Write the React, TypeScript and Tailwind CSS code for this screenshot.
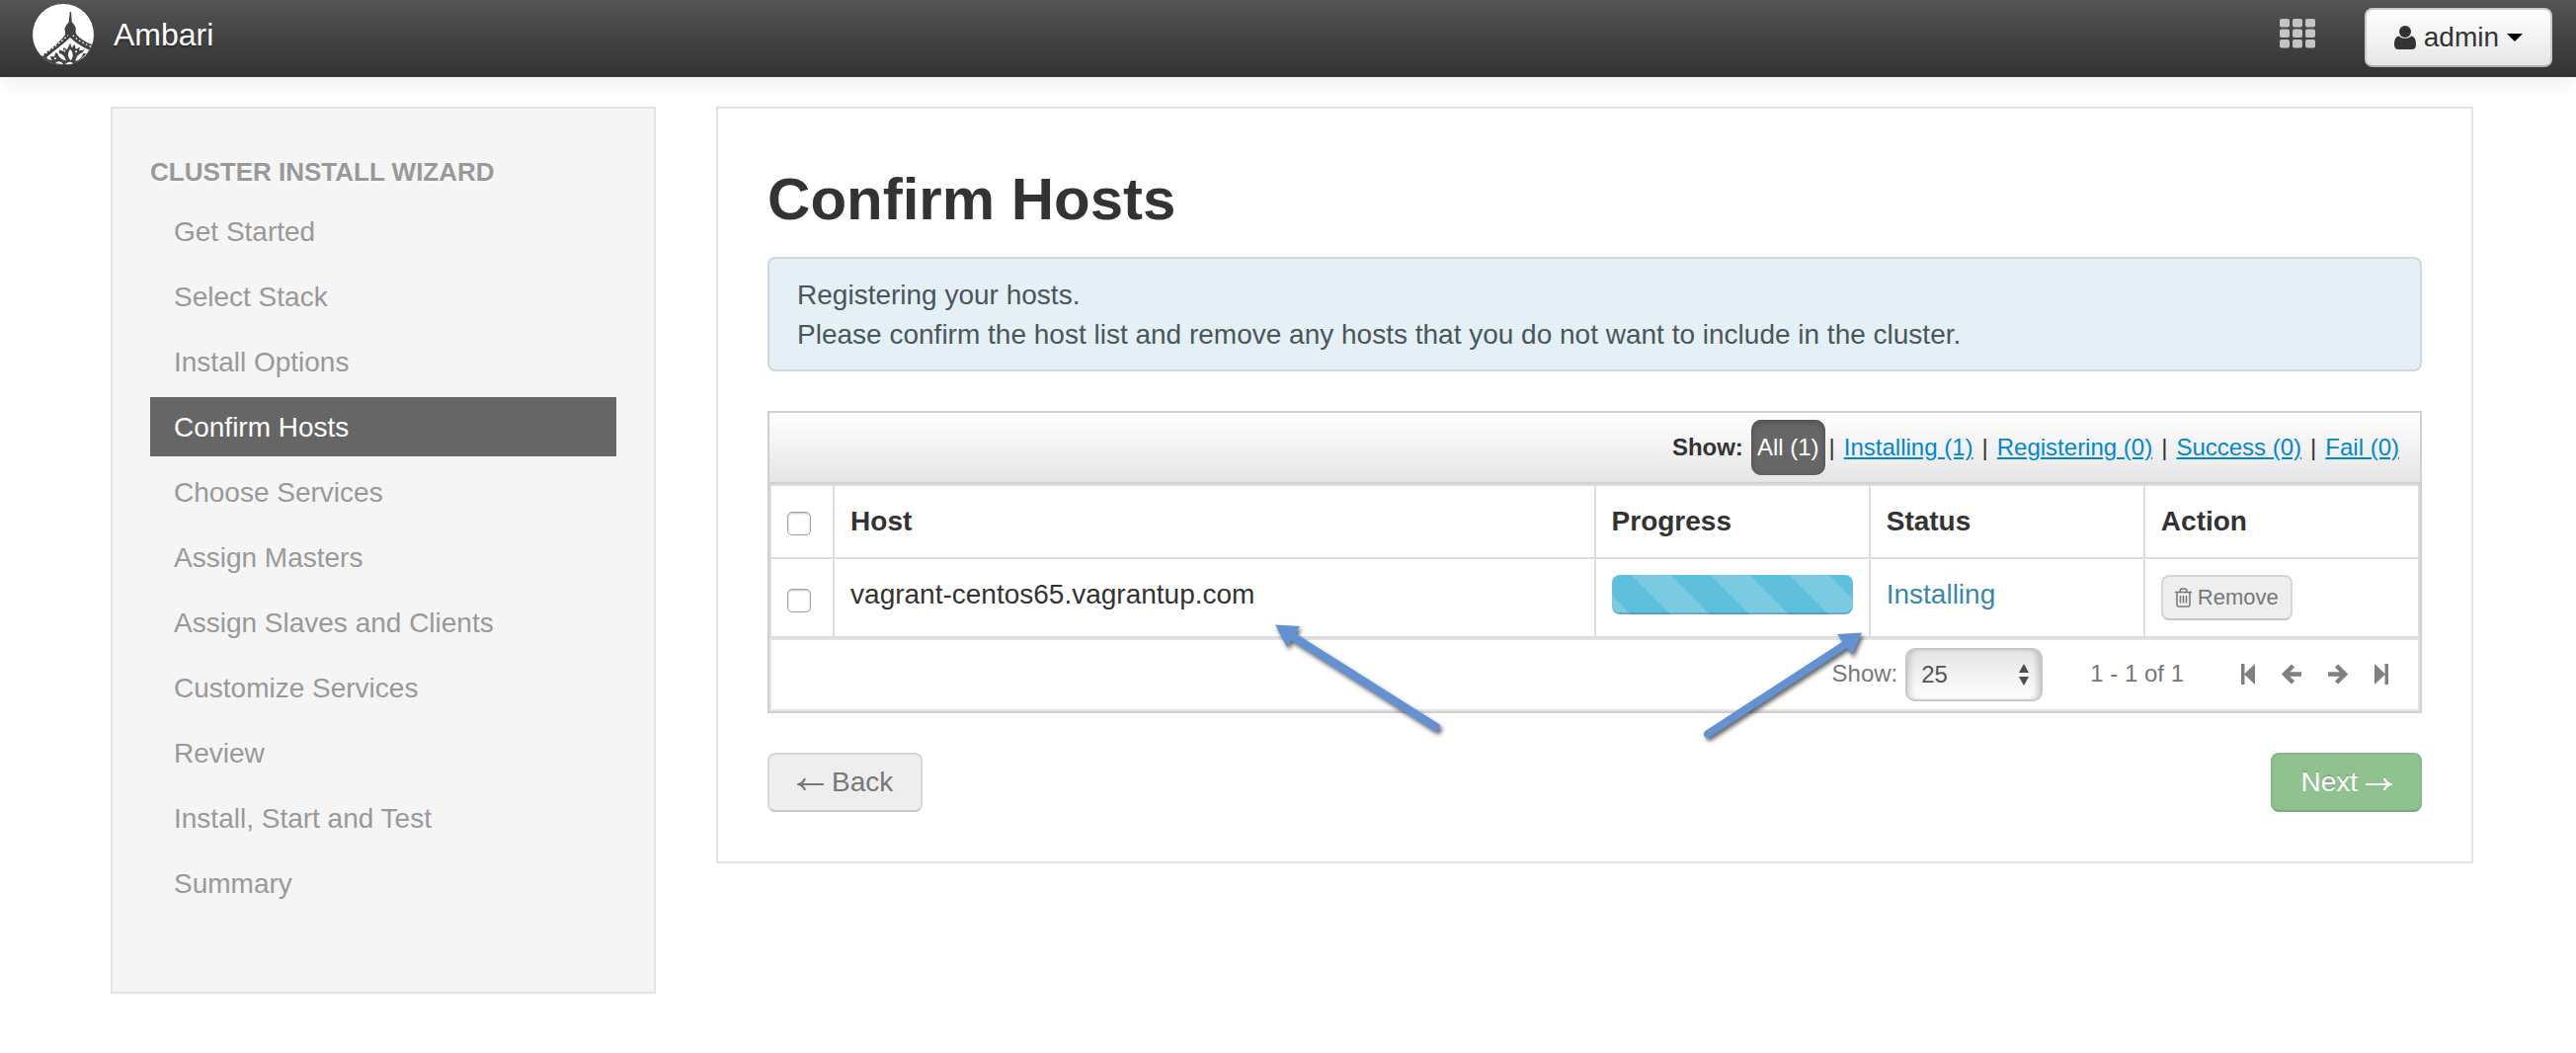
import React from "react";

const steps = [
  "Get Started",
  "Select Stack",
  "Install Options",
  "Confirm Hosts",
  "Choose Services",
  "Assign Masters",
  "Assign Slaves and Clients",
  "Customize Services",
  "Review",
  "Install, Start and Test",
  "Summary",
];

const filters = ["Installing (1)", "Registering (0)", "Success (0)", "Fail (0)"];

function Logo() {
  return (
    <svg viewBox="16 12 184 184" className="size-[62px]" aria-hidden="true">
      <defs>
        <clipPath id="disc">
          <circle cx="108" cy="104" r="92" />
        </clipPath>
      </defs>
      <g clipPath="url(#disc)">
        <rect x="16" y="12" width="184" height="184" fill="#fff" />
        {/* roof and spire */}
        <path
          d="M128 36 L132 36 L134 66 L141 74 L146 84 L145 96 L148 104 C160 118 178 128 204 138 L204 204 L10 204 L38 172 C62 152 96 132 114 104 L114 96 L112 86 L118 74 L125 66 Z"
          fill="#434343"
        />
        <path d="M129 113 C110 132 84 150 58 172 L62 178 L74 181 L104 176 L128 160 L160 178 L176 168 L186 150 C166 142 146 130 129 113 Z" fill="#fff" />
        <path
          d="M46 168 C72 146 100 130 122 106 M137 106 C152 122 172 132 198 143"
          fill="none"
          stroke="#fff"
          strokeWidth="4"
          strokeDasharray="5 7"
        />
        {/* rosette under the roof */}
        <path
          d="M129 130 L134 144 L142 134 L146 148 L158 142 L156 152 L172 150 L164 160 L178 162 L160 178 L154 204 L70 204 L76 184 L68 170 L82 170 L84 158 L95 162 L96 150 L107 154 L110 142 L119 150 Z"
          fill="#434343"
        />
        <path d="M129 148 C140 160 138 174 131 182 C121 174 120 160 129 148 Z" fill="#fff" />
        <path d="M90 158 C104 160 114 170 116 182 C102 180 93 170 90 158 Z" fill="#fff" />
        <path d="M168 158 C166 172 156 182 145 183 C146 172 154 160 168 158 Z" fill="#fff" />
        <path d="M84 190 C92 182 104 184 108 194 Z M114 194 C120 184 134 184 138 192 Z" fill="#fff" />
        <circle cx="112" cy="153" r="3" fill="#fff" />
        <circle cx="147" cy="155" r="3" fill="#fff" />
        <circle cx="84" cy="176" r="3" fill="#fff" />
      </g>
    </svg>
  );
}

function GridIcon() {
  return (
    <svg viewBox="0 0 36 30" className="h-[30px] w-9" fill="#c4c4c4" aria-hidden="true">
      {[0, 10.5, 21].map((y) =>
        [0, 13, 26].map((x) => <rect key={`${x}-${y}`} x={x} y={y} width="10" height="8.5" rx="2" />)
      )}
    </svg>
  );
}

function UserIcon() {
  return (
    <svg viewBox="0 0 22 24" className="h-6 w-[22px]" fill="#333" aria-hidden="true">
      <circle cx="11" cy="6" r="6" />
      <path d="M5 10.5 C7 13.6 15 13.6 17 10.5 C20.500 11 22 14 22 19 C22 22.500 20.500 24 18 24 L4 24 C1.500 24 0 22.500 0 19 C0 14 1.500 11 5 10.500 Z" />
    </svg>
  );
}

function TrashIcon() {
  return (
    <svg viewBox="0 0 17 20" className="h-5 w-[17px]" fill="none" stroke="#777" strokeWidth="1.5" aria-hidden="true">
      <path d="M0 4.500 H17 M5 4.500 C5 2 6 1 7 1 H10 C11 1 12 2 12 4.500 M2 4.500 V17 C2 18.500 2.800 19 4 19 H13 C14.200 19 15 18.500 15 17 V4.500 M5.500 8 V15.500 M8.500 8 V15.500 M11.500 8 V15.500" />
    </svg>
  );
}

function EndIcon({ last = false }: { last?: boolean }) {
  return (
    <svg viewBox="0 0 14 21" className="h-[21px] w-3.5" fill="#808080" aria-hidden="true">
      {last ? <path d="M0 0 L10.500 10 V0 H14 V21 H10.500 V11 L0 21 Z" /> : <path d="M14 0 L3.500 10 V0 H0 V21 H3.500 V11 L14 21 Z" />}
    </svg>
  );
}

function StepIcon({ next = false }: { next?: boolean }) {
  return (
    <svg viewBox="0 0 20 21" className="h-[21px] w-5" fill="none" stroke="#808080" strokeWidth="4.5" aria-hidden="true">
      {next ? <path d="M0 10.500 H16 M8.500 2 L17 10.500 L8.500 19" /> : <path d="M20 10.500 H4 M11.500 2 L3 10.500 L11.500 19" />}
    </svg>
  );
}

function ThinArrow({ right = false }: { right?: boolean }) {
  return (
    <svg viewBox="0 0 27 14" className="mt-1 h-3.5 w-[27px]" fill="none" stroke="currentColor" strokeWidth="2.200" aria-hidden="true">
      {right ? <path d="M0 7 H25 M19 1 C20 4 22 6 25.500 7 C22 8 20 10 19 13" /> : <path d="M27 7 H2 M8 1 C7 4 5 6 1.500 7 C5 8 7 10 8 13" />}
    </svg>
  );
}

function Checkbox({ label }: { label: string }) {
  return (
    <input
      type="checkbox"
      aria-label={label}
      className="block size-6 appearance-none rounded-[5px] border border-[#a0a0a0] bg-white shadow-[inset_0_1px_2px_rgba(0,0,0,0.25)]"
    />
  );
}

const th = "border-r-2 border-b-2 border-[#ddd] px-4 py-4 text-left align-top font-bold";
const td = "border-r-2 border-b-2 border-[#ddd] px-4 py-4 text-left align-top";

export default function App() {
  return (
    <div className="bg-white font-['Liberation_Sans',Arial,sans-serif] text-[28px] leading-10 text-[#333]">
      <header className="flex h-[78px] items-start justify-between bg-linear-to-b from-[#545454] to-[#333] pr-6 pl-[33px] shadow-[0_2px_20px_rgba(0,0,0,0.1)]">
        <a href="#" className="flex items-start gap-5 pt-1 text-[32px] leading-[62px] text-white [text-shadow:0_2px_2px_rgba(0,0,0,0.4)]">
          <Logo />
          Ambari
        </a>
        <div className="flex items-start gap-[50px] pt-2">
          <button type="button" aria-label="Views" className="pt-[11px]">
            <GridIcon />
          </button>
          <button
            type="button"
            className="flex h-[60px] items-center rounded-lg border-2 border-[#ccc] border-b-[#b3b3b3] bg-linear-to-b from-white to-[#e6e6e6] px-7 [text-shadow:0_2px_2px_rgba(255,255,255,0.75)]"
          >
            <UserIcon />
            <span className="ml-2">admin</span>
            <svg viewBox="0 0 16 8" className="ml-2 h-2 w-4" aria-hidden="true">
              <path d="M0 0 H16 L8 8 Z" fill="#000" />
            </svg>
          </button>
        </div>
      </header>

      <div className="flex items-start gap-[61px] pt-[30px] pr-[104px] pb-[60px] pl-28">
        <nav aria-label="Cluster install wizard" className="w-[23.08%] shrink-0 border-2 border-[#e3e3e3] bg-[#f5f5f5] px-[38px] pt-11 pb-20 text-[#999]">
          <h2 className="mb-2.5 text-[26px] font-bold uppercase [text-shadow:0_2px_0_rgba(255,255,255,0.6)]">Cluster Install Wizard</h2>
          <ul className="flex flex-col gap-1.5">
            {steps.map((step) => (
              <li key={step}>
                <a
                  href="#"
                  className={
                    step === "Confirm Hosts"
                      ? "block bg-[#666] px-6 pt-[11px] pb-[9px] text-white"
                      : "block px-6 pt-[11px] pb-[9px]"
                  }
                >
                  {step}
                </a>
              </li>
            ))}
          </ul>
        </nav>

        <main className="min-w-0 flex-1 border-2 border-[#e3e3e3] px-[50px] py-[50px]">
          <h1 className="pt-0.5 pb-[18px] text-[60px] leading-[80px] font-bold">Confirm Hosts</h1>

          <div className="rounded-lg border-2 border-[#ced9dc] bg-[#e4f0f5] px-7 pt-[17px] pb-[15px] text-[#4a565a]">
            <p>Registering your hosts.</p>
            <p>Please confirm the host list and remove any hosts that you do not want to include in the cluster.</p>
          </div>

          <section className="relative mt-10 border-2 border-[#d0d0d0]">
            <div className="flex h-[72px] items-center justify-end border-b-2 border-[#d0d0d0] bg-linear-to-b from-white to-[#e5e5e5] pr-[21px] text-2xl">
              <span className="mr-2 font-bold">Show:</span>
              <a href="#" className="rounded-[10px] bg-[#666] px-1.5 py-2 leading-10 text-white shadow-[inset_0_2px_6px_rgba(0,0,0,0.25)]">
                All (1)
              </a>
              {filters.map((f, i) => (
                <React.Fragment key={f}>
                  <span className={i === 0 ? "mr-[9px] ml-1" : "mx-[9px]"}>|</span>
                  <a href="#" className="text-[#0088cc] underline">
                    {f}
                  </a>
                </React.Fragment>
              ))}
            </div>

            <table className="w-full table-fixed border-separate border-spacing-0 border-t-2 border-l-2 border-[#ddd]">
              <thead>
                <tr>
                  <th className={`${th} w-[64px]`}>
                    <div className="pt-2.5">
                      <Checkbox label="Select all hosts" />
                    </div>
                  </th>
                  <th className={th}>Host</th>
                  <th className={`${th} w-1/6`}>Progress</th>
                  <th className={`${th} w-1/6`}>Status</th>
                  <th className={`${th} w-1/6`}>Action</th>
                </tr>
              </thead>
              <tbody>
                <tr>
                  <td className={td}>
                    <div className="pt-3.5">
                      <Checkbox label="Select vagrant-centos65.vagrantup.com" />
                    </div>
                  </td>
                  <td className={td}>vagrant-centos65.vagrantup.com</td>
                  <td className={td}>
                    <div
                      role="progressbar"
                      aria-label="Installation progress"
                      className="h-10 rounded-lg bg-[#5fc0dc] bg-[linear-gradient(45deg,rgba(255,255,255,0.17)_25%,transparent_25%,transparent_50%,rgba(255,255,255,0.17)_50%,rgba(255,255,255,0.17)_75%,transparent_75%,transparent)] bg-[length:80px_80px] bg-[position:20px_0] shadow-[inset_0_-2px_0_rgba(0,0,0,0.15)]"
                    />
                  </td>
                  <td className={`${td} text-[#3a87ad]`}>Installing</td>
                  <td className={td}>
                    <button
                      type="button"
                      disabled
                      className="flex h-[46px] items-center gap-1.5 rounded-lg border-2 border-[#d6d6d6] border-b-[#c6c6c6] bg-[#eee] px-3 text-[22px] text-[#777]"
                    >
                      <TrashIcon />
                      Remove
                    </button>
                  </td>
                </tr>
              </tbody>
            </table>

            <div className="flex h-[74px] items-start justify-end border-2 border-[#e3e3e3] pt-2 pr-[30px] text-2xl text-[#777]">
              <label htmlFor="page-size" className="mr-2 leading-[52px]">
                Show:
              </label>
              <div className="relative">
                <select
                  id="page-size"
                  defaultValue="25"
                  className="block h-[54px] w-[139px] appearance-none rounded-[10px] border-2 border-[#c6c6c6] bg-linear-to-b from-[#e4e4e4] to-white px-3.5 text-[#555] shadow-[inset_6px_0_6px_-3px_rgba(0,0,0,0.15),inset_-6px_0_6px_-3px_rgba(0,0,0,0.2)]"
                >
                  <option>10</option>
                  <option>25</option>
                  <option>50</option>
                </select>
                <svg viewBox="0 0 10 22" className="pointer-events-none absolute top-4 right-3.5 h-[22px] w-2.5" fill="#4d4d4d" aria-hidden="true">
                  <path d="M5 0 L10 9 H0 Z M5 22 L10 13 H0 Z" />
                </svg>
              </div>
              <span className="ml-12 leading-[52px]">1 - 1 of 1</span>
              <div className="ml-[58px] flex h-[52px] items-center gap-[27px]">
                <button type="button" aria-label="First page"><EndIcon /></button>
                <button type="button" aria-label="Previous page"><StepIcon /></button>
                <button type="button" aria-label="Next page"><StepIcon next /></button>
                <button type="button" aria-label="Last page"><EndIcon last /></button>
              </div>
            </div>

            {/* callout arrows over the table */}
            <svg viewBox="0 0 180 120" className="pointer-events-none absolute top-[210px] left-[506px] h-[120px] w-[180px] drop-shadow-[2px_3px_2px_rgba(0,0,0,0.6)]" aria-hidden="true">
              <path d="M20 14 L169 108" stroke="#6292d3" strokeWidth="8" strokeLinecap="round" />
              <path d="M6 4.500 L31 6 L18 27 Z" fill="#6292d3" />
            </svg>
            <svg viewBox="0 0 180 120" className="pointer-events-none absolute top-[218px] right-[558px] h-[120px] w-[180px] drop-shadow-[2px_3px_2px_rgba(0,0,0,0.6)]" aria-hidden="true">
              <path d="M160 14 L17 107" stroke="#6292d3" strokeWidth="8" strokeLinecap="round" />
              <path d="M173 4.500 L148 6 L163 27 Z" fill="#6292d3" />
            </svg>
          </section>

          <div className="mt-10 flex justify-between">
            <button type="button" disabled className="flex h-[60px] items-center gap-2 rounded-lg border-2 border-[#d6d6d6] border-b-[#c6c6c6] bg-[#eee] px-7 text-[#777]">
              <ThinArrow />
              Back
            </button>
            <button
              type="button"
              disabled
              className="flex h-[60px] items-center gap-2 rounded-lg border-2 border-[#87b88a] border-b-[#7fa882] bg-[#90c290] px-7 text-white [text-shadow:0_-2px_0_rgba(0,0,0,0.12)]"
            >
              Next
              <ThinArrow right />
            </button>
          </div>
        </main>
      </div>
    </div>
  );
}
